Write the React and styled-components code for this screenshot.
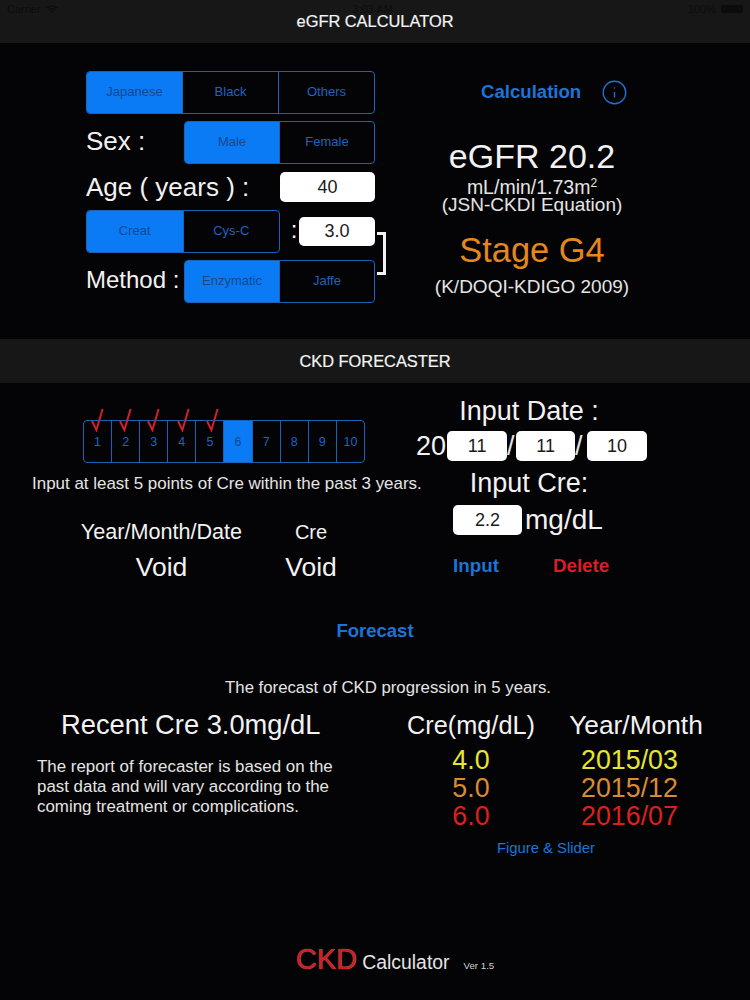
import React from 'react';
import styled, { createGlobalStyle } from 'styled-components';
import { Info } from 'lucide-react';

const GlobalStyle = createGlobalStyle`
  html, body {
    margin: 0;
    padding: 0;
    background: #040406;
  }
  * {
    box-sizing: border-box;
  }
`;

const races = ['Japanese', 'Black', 'Others'];
const points = [1, 2, 3, 4, 5, 6, 7, 8, 9, 10];
const forecast = [
  { cre: '4.0', date: '2015/03', color: '#e6e532' },
  { cre: '5.0', date: '2015/12', color: '#d98a33' },
  { cre: '6.0', date: '2016/07', color: '#dd201c' },
];

function Segments({ items, width, active = 0 }) {
  return (
    <SegmentGroup $width={width}>
      {items.map((item, i) => (
        <Segment key={item} $active={i === active}>{item}</Segment>
      ))}
    </SegmentGroup>
  );
}

export default function App() {
  return (
    <Page>
      <GlobalStyle />
      <Bar $height={43}>
        <StatusBar>
          <StatusSide>
            Carrier
            <svg width="12" height="9" viewBox="0 0 12 9" fill="none" stroke="#0c0c0c" strokeWidth="1.3">
              <path d="M1 3.2a7 7 0 0 1 10 0M2.8 5a4.4 4.4 0 0 1 6.4 0M4.6 6.8a2 2 0 0 1 2.8 0" />
            </svg>
          </StatusSide>
          <span>3:03 AM</span>
          <StatusSide>
            100%
            <Battery />
          </StatusSide>
        </StatusBar>
        eGFR CALCULATOR
      </Bar>

      <Calculator>
        <Form>
          <Segments items={races} width={289} />
          <FormRow $top={7}>
            <RowLabel $raise={4}>Sex :</RowLabel>
            <Segments items={['Male', 'Female']} width={191} />
          </FormRow>
          <FormRow $top={8}>
            <RowLabel>Age ( years ) :</RowLabel>
            <ValueInput $width={95} $height={30}>40</ValueInput>
          </FormRow>
          <FormRow $top={8}>
            <Segments items={['Creat', 'Cys-C']} width={194} />
            <Colon>:</Colon>
            <ValueInput $width={76} $height={29}>3.0</ValueInput>
          </FormRow>
          <FormRow $top={7}>
            <RowLabel $size={24} $raise={4}>Method :</RowLabel>
            <Segments items={['Enzymatic', 'Jaffe']} width={191} />
          </FormRow>
          <Bracket />
        </Form>
        <Result>
          <CalcRow>
            <LinkText $size={18.6}>Calculation</LinkText>
            <Info size={27} strokeWidth={1.2} color="#1c74d8" />
          </CalcRow>
          <EgfrValue>eGFR 20.2</EgfrValue>
          <Unit $size={19.5}>mL/min/1.73m<sup>2</sup></Unit>
          <Unit>(JSN-CKDI Equation)</Unit>
          <StageValue>Stage G4</StageValue>
          <Unit>(K/DOQI-KDIGO 2009)</Unit>
        </Result>
      </Calculator>

      <Bar $height={44}>CKD FORECASTER</Bar>

      <InputSection>
        <History>
          <Strip>
            {points.map((n) => (
              <StripCell key={n} $active={n === 6}>
                {n < 6 && (
                  <Check
                    $shift={n > 3 ? n - 2 : 0}
                    width="13"
                    height="24"
                    viewBox="0 0 13 24"
                    fill="none"
                    stroke="#d4202a"
                    strokeWidth="2"
                  >
                    <path d="M1 13l4.4 9L11.6 1" />
                  </Check>
                )}
                {n}
              </StripCell>
            ))}
          </Strip>
          <Hint>Input at least 5 points of Cre within the past 3 years.</Hint>
          <VoidTable>
            <VoidHead>Year/Month/Date</VoidHead>
            <VoidHead>Cre</VoidHead>
            <VoidValue>Void</VoidValue>
            <VoidValue>Void</VoidValue>
          </VoidTable>
        </History>
        <Entry>
          <EntryTitle>Input Date :</EntryTitle>
          <DateRow>
            <EntryText>20</EntryText>
            <SmallInput $width={60} $left={1}>11</SmallInput>
            <Slash $width={7}>/</Slash>
            <SmallInput $width={59}>11</SmallInput>
            <Slash $width={10}>/</Slash>
            <SmallInput $width={60}>10</SmallInput>
          </DateRow>
          <EntryTitle $top={7}>Input Cre:</EntryTitle>
          <CreRow>
            <SmallInput $width={69} $left={0}>2.2</SmallInput>
            <EntryText $size={28}>mg/dL</EntryText>
          </CreRow>
          <ActionRow>
            <LinkText $size={18.8}>Input</LinkText>
            <LinkText $size={18.8} $color="#d81f26">Delete</LinkText>
          </ActionRow>
        </Entry>
      </InputSection>

      <ForecastLink>
        <LinkText $size={18.5}>Forecast</LinkText>
      </ForecastLink>
      <ForecastNote>The forecast of CKD progression in 5 years.</ForecastNote>

      <ForecastSection>
        <Recent>
          <RecentTitle>Recent Cre 3.0mg/dL</RecentTitle>
          <RecentText>
            The report of forecaster is based on the<br />
            past data and will vary according to the<br />
            coming treatment or complications.
          </RecentText>
        </Recent>
        <ForecastBlock>
          <ForecastTable>
            <TableHead>Cre(mg/dL)</TableHead>
            <TableHead $size={26.3}>Year/Month</TableHead>
            {forecast.map((row) => (
              <React.Fragment key={row.date}>
                <TableCell $color={row.color}>{row.cre}</TableCell>
                <TableCell $color={row.color} $inset={13}>{row.date}</TableCell>
              </React.Fragment>
            ))}
          </ForecastTable>
          <FigureLink>Figure &amp; Slider</FigureLink>
        </ForecastBlock>
      </ForecastSection>

      <Footer>
        <Logo>CKD</Logo>
        <LogoText>Calculator</LogoText>
        <Version>Ver 1.5</Version>
      </Footer>
    </Page>
  );
}

const Page = styled.div`
  width: 750px;
  height: 1000px;
  overflow: hidden;
  background: #040406;
  color: #f2f2f2;
  font-family: 'Liberation Sans', Arial, sans-serif;
`;

const Bar = styled.div`
  position: relative;
  height: ${(p) => p.$height}px;
  background: #171717;
  display: flex;
  align-items: center;
  justify-content: center;
  font-size: 16.4px;
  color: #f4f4f4;
  -webkit-text-stroke: 0.2px #f4f4f4;
`;

const StatusBar = styled.div`
  position: absolute;
  top: 3px;
  left: 7px;
  right: 7px;
  display: flex;
  justify-content: space-between;
  align-items: center;
  font-size: 11px;
  color: #0c0c0c;
  -webkit-text-stroke: 0;
`;

const StatusSide = styled.span`
  display: flex;
  align-items: center;
  gap: 5px;
`;

const Battery = styled.span`
  width: 22px;
  height: 8px;
  border-radius: 2px;
  background: #0c0c0c;
`;

const Calculator = styled.section`
  height: 296px;
  padding: 28px 0 0 86px;
  display: flex;
`;

const Form = styled.div`
  position: relative;
  width: 289px;
`;

const FormRow = styled.div`
  display: flex;
  align-items: center;
  justify-content: space-between;
  margin-top: ${(p) => p.$top}px;
`;

const RowLabel = styled.span`
  padding-bottom: ${(p) => p.$raise || 0}px;
  font-size: ${(p) => p.$size || 26}px;
  line-height: 30px;
  white-space: nowrap;
`;

const SegmentGroup = styled.div`
  width: ${(p) => p.$width}px;
  height: 43px;
  flex: none;
  display: flex;
  border: 1px solid #1a64b8;
  border-radius: 4px;
  overflow: hidden;
`;

const Segment = styled.div`
  flex: 1;
  display: flex;
  align-items: center;
  justify-content: center;
  padding-bottom: 2px;
  font-size: 13px;
  background: ${(p) => (p.$active ? '#0a7af5' : 'transparent')};
  color: ${(p) => (p.$active ? '#15498f' : '#1f62c0')};
  & + & {
    border-left: 1px solid #1a64b8;
  }
`;

const ValueInput = styled.div`
  width: ${(p) => p.$width}px;
  height: ${(p) => p.$height}px;
  flex: none;
  background: #fff;
  border-radius: 5px;
  color: #1a1a1a;
  font-size: 18px;
  display: flex;
  align-items: center;
  justify-content: center;
`;

const Colon = styled.span`
  font-size: 24px;
  margin-left: 9px;
  margin-top: -4px;
`;

const Bracket = styled.span`
  position: absolute;
  left: 291px;
  top: 161px;
  width: 9px;
  height: 43px;
  border: 3px solid #f2f2f2;
  border-left: none;
`;

const Result = styled.div`
  width: 292px;
  margin-left: 11px;
  display: flex;
  flex-direction: column;
  align-items: center;
`;

const CalcRow = styled.div`
  align-self: flex-start;
  height: 42px;
  margin-left: 95px;
  display: flex;
  align-items: center;
  gap: 20px;
`;

const LinkText = styled.span`
  font-size: ${(p) => p.$size}px;
  font-weight: bold;
  color: ${(p) => p.$color || '#1c74d8'};
`;

const EgfrValue = styled.div`
  margin-top: 23px;
  margin-bottom: 2px;
  font-size: 34px;
  line-height: 40px;
`;

const Unit = styled.div`
  font-size: ${(p) => p.$size || 19}px;
  line-height: 18px;
  color: #e4e4e4;
  white-space: nowrap;
  sup {
    font-size: 12px;
    line-height: 0;
  }
`;

const StageValue = styled.div`
  margin: 17px 0 9px;
  font-size: 34.4px;
  line-height: 38px;
  color: #e5861f;
`;

const InputSection = styled.section`
  height: 209px;
  display: flex;
  padding-top: 37px;
`;

const History = styled.div`
  width: 416px;
  flex: none;
  padding-left: 32px;
`;

const Strip = styled.div`
  width: 282px;
  height: 43px;
  margin-left: 51px;
  display: flex;
  border: 1px solid #1a64b8;
  border-radius: 4px;
`;

const StripCell = styled.div`
  position: relative;
  flex: 1;
  display: flex;
  align-items: center;
  justify-content: center;
  font-size: 12.5px;
  background: ${(p) => (p.$active ? '#0a7af5' : 'transparent')};
  color: ${(p) => (p.$active ? '#15498f' : '#1f62c0')};
  & + & {
    border-left: 1px solid #1a64b8;
  }
`;

const Check = styled.svg`
  position: absolute;
  left: ${(p) => 7 + p.$shift}px;
  top: -13px;
`;

const Hint = styled.div`
  margin-top: 11px;
  font-size: 16.95px;
  line-height: 19px;
  color: #e4e4e4;
  white-space: nowrap;
`;

const VoidTable = styled.div`
  width: 300px;
  margin-top: 27px;
  display: grid;
  grid-template-columns: 259px 40px;
  justify-items: center;
`;

const VoidHead = styled.div`
  font-size: 21.6px;
  line-height: 24px;
  white-space: nowrap;
  &:nth-child(2) {
    font-size: 20px;
  }
`;

const VoidValue = styled.div`
  margin-top: 8px;
  font-size: 26.5px;
  line-height: 30px;
`;

const Entry = styled.div`
  width: 232px;
  margin-top: -24px;
  display: flex;
  flex-direction: column;
  align-items: center;
`;

const EntryTitle = styled.div`
  margin-top: ${(p) => p.$top || 0}px;
  margin-right: 6px;
  font-size: 27px;
  line-height: 30px;
`;

const EntryText = styled.span`
  font-size: ${(p) => p.$size || 27}px;
  line-height: 30px;
`;

const DateRow = styled.div`
  margin-top: 5px;
  align-self: flex-start;
  display: flex;
  align-items: center;
`;

const SmallInput = styled.div`
  width: ${(p) => p.$width}px;
  height: 30px;
  margin-left: ${(p) => p.$left ?? 2}px;
  margin-right: ${(p) => (p.$left === 0 ? 2 : 0)}px;
  background: #fff;
  border-radius: 5px;
  color: #1a1a1a;
  font-size: 18px;
  display: flex;
  align-items: center;
  justify-content: center;
`;

const Slash = styled.span`
  width: ${(p) => p.$width}px;
  font-size: 27px;
  line-height: 30px;
  color: #e4e4e4;
`;

const CreRow = styled.div`
  margin-top: 7px;
  align-self: flex-start;
  margin-left: 37px;
  display: flex;
  align-items: center;
  gap: 1px;
`;

const ActionRow = styled.div`
  margin-top: 20px;
  align-self: flex-start;
  margin-left: 37px;
  display: flex;
  gap: 54px;
`;

const ForecastLink = styled.div`
  margin-top: 26px;
  text-align: center;
  line-height: 26px;
`;

const ForecastNote = styled.div`
  margin-top: 34px;
  padding-left: 26px;
  text-align: center;
  font-size: 16.75px;
  line-height: 18px;
  color: #e4e4e4;
`;

const ForecastSection = styled.section`
  margin-top: 10px;
  display: flex;
`;

const Recent = styled.div`
  width: 375px;
  flex: none;
  padding-left: 37px;
`;

const RecentTitle = styled.div`
  margin-left: 24px;
  font-size: 27.3px;
  line-height: 36px;
  white-space: nowrap;
`;

const RecentText = styled.p`
  margin: 14px 0 0;
  font-size: 16.9px;
  line-height: 20px;
  color: #e4e4e4;
  white-space: nowrap;
`;

const ForecastBlock = styled.div`
  display: flex;
  flex-direction: column;
  align-items: flex-start;
`;

const ForecastTable = styled.div`
  display: grid;
  grid-template-columns: 192px 138px;
  justify-items: center;
`;

const TableHead = styled.div`
  font-size: ${(p) => p.$size || 25.3}px;
  line-height: 36px;
  margin-bottom: 3px;
  white-space: nowrap;
`;

const TableCell = styled.div`
  margin-right: ${(p) => p.$inset || 0}px;
  font-size: 26.8px;
  line-height: 28px;
  color: ${(p) => p.$color};
`;

const FigureLink = styled.div`
  margin: 9px 0 0 122px;
  font-size: 14.8px;
  line-height: 18px;
  color: #1c74d8;
`;

const Footer = styled.footer`
  margin-top: 84px;
  margin-left: 296px;
  display: flex;
  align-items: baseline;
`;

const Logo = styled.span`
  font-size: 29px;
  line-height: 36px;
  color: #cf1f25;
  text-shadow: 0 0 1px #e88a8a;
`;

const LogoText = styled.span`
  margin-left: 5px;
  font-size: 19.4px;
  color: #e4e4e4;
`;

const Version = styled.span`
  margin-left: 14px;
  font-size: 9.7px;
  color: #d0d0d0;
`;
